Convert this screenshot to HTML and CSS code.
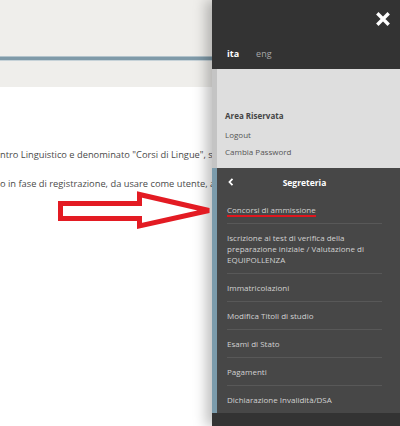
FILE: index.html
```html
<!DOCTYPE html>
<html lang="it">
<head>
<meta charset="utf-8">
<title>Segreteria</title>
<link rel="stylesheet" href="styles.css">
</head>
<body>
<div class="page">
  <header class="site-header">
    <div class="header-line"></div>
  </header>
  <main class="content">
    <p>ntro Linguistico e denominato "Corsi di Lingue", s</p>
    <p>o in fase di registrazione, da usare come utente, a</p>
  </main>
</div>

<svg class="annot-arrow" width="400" height="426" viewBox="0 0 400 426" aria-hidden="true">
  <polygon points="60.5,203.5 139.5,203.5 139.5,194.5 209,210.5 139.5,226 139.5,218.5 60.5,218.5" fill="#fff" stroke="#e31b23" stroke-width="5" stroke-linejoin="miter"/>
</svg>

<aside class="panel">
  <div class="panel-top">
    <div class="close-row">
      <svg class="close-icon" width="14" height="14" viewBox="0 0 14 14" aria-hidden="true">
        <path d="M2.5 2.5 L11.5 11.5 M11.5 2.5 L2.5 11.5" stroke="#fff" stroke-width="3.4" stroke-linecap="square"/>
      </svg>
    </div>
    <div class="lang-row">
      <span class="lang active">ita</span>
      <span class="lang">eng</span>
    </div>
  </div>
  <div class="panel-user">
    <div class="user-title">Area Riservata</div>
    <div class="user-link">Logout</div>
    <div class="user-link">Cambia Password</div>
  </div>
  <nav class="panel-menu">
    <div class="menu-head">
      <svg class="chev" width="6" height="8" viewBox="0 0 6 8" aria-hidden="true">
        <path d="M4.5 0.8 L1.5 4 L4.5 7.2" fill="none" stroke="#fff" stroke-width="1.8"/>
      </svg>
      <span class="menu-title">Segreteria</span>
    </div>
    <ul class="menu-list">
      <li><span class="marked">Concorsi di ammissione</span></li>
      <li>Iscrizione ai test di verifica della preparazione iniziale / Valutazione di EQUIPOLLENZA</li>
      <li>Immatricolazioni</li>
      <li>Modifica Titoli di studio</li>
      <li>Esami di Stato</li>
      <li>Pagamenti</li>
      <li class="last">Dichiarazione Invalidità/DSA</li>
    </ul>
  </nav>
  <div class="panel-bottom"></div>
</aside>
</body>
</html>
```

FILE: styles.css
```css
html, body {
  margin: 0;
  padding: 0;
}
body {
  width: 400px;
  height: 426px;
  overflow: hidden;
  position: relative;
  background: #fff;
  font-family: "Open Sans", "Liberation Sans", sans-serif;
}
.page {
  width: 400px;
}
.site-header {
  height: 87px;
  background: #efeeeb;
  padding-top: 56px;
  box-sizing: border-box;
}
.header-line {
  height: 3px;
  background: #7f9aa8;
  border-top: 1px solid #b3c3cb;
  border-bottom: 1px solid #c6d2d8;
}
.content {
  padding-top: 62px;
  width: 212px;
}
.content p {
  margin: 0 0 17px 0;
  font-size: 9.3px;
  line-height: 12px;
  color: #4a4a4a;
  white-space: nowrap;
}
.annot-arrow {
  position: absolute;
  left: 0;
  top: 0;
  z-index: 3;
}
.panel {
  position: absolute;
  top: 0;
  right: 0;
  width: 188px;
  height: 426px;
  display: flex;
  flex-direction: column;
  box-shadow: -6px 0 12px rgba(0, 0, 0, 0.25);
  z-index: 2;
}
.panel-top {
  height: 69px;
  background: #333333;
  box-sizing: border-box;
  padding: 12px 10px 0 15px;
  display: flex;
  flex-direction: column;
}
.close-row {
  display: flex;
  justify-content: flex-end;
}
.close-icon {
  display: block;
}
.lang-row {
  margin-top: 22px;
  display: flex;
  gap: 17px;
  font-size: 9px;
  line-height: 12px;
}
.lang {
  color: #a8a8a8;
}
.lang.active {
  color: #fff;
  font-weight: 700;
}
.panel-user {
  height: 99px;
  background: #dedede;
  border-left: 5px solid #c4c4c4;
  box-sizing: border-box;
  padding: 41px 0 0 8px;
  font-size: 8px;
  line-height: 11px;
  color: #555;
}
.user-title {
  font-weight: 700;
  color: #444;
  margin-bottom: 8px;
}
.user-link {
  margin-bottom: 6px;
}
.panel-menu {
  height: 245px;
  background: #474747;
  border-left: 5px solid #7b9bab;
  box-sizing: border-box;
  padding: 0 18px 0 10px;
}
.menu-head {
  height: 28px;
  display: flex;
  align-items: center;
  position: relative;
  justify-content: center;
}
.chev {
  position: absolute;
  left: 1px;
  top: 10px;
}
.menu-title {
  color: #fff;
  font-weight: 700;
  font-size: 8.5px;
  line-height: 11px;
}
.menu-list {
  list-style: none;
  margin: 0;
  padding: 0;
}
.menu-list li {
  font-size: 8px;
  line-height: 11px;
  color: #d2d2d2;
  padding: 8px 0;
  border-bottom: 1px solid #585858;
}
.menu-list li.last {
  border-bottom: none;
}
.marked {
  border-bottom: 2px solid #e0161e;
}
.panel-bottom {
  flex: 1;
  background: #333333;
}
```
